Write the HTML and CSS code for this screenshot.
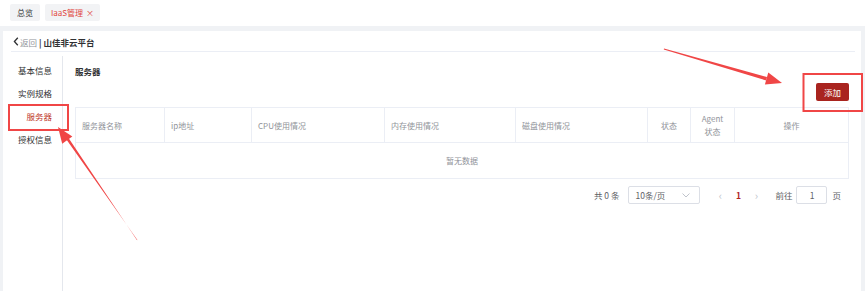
FILE: index.html
```html
<!DOCTYPE html>
<html lang="zh-CN">
<head>
    <meta charset="UTF-8">
    <meta name="viewport" content="width=device-width, initial-scale=1.0">
    <title>IaaS管理 - 山佳非云平台</title>
    <link rel="stylesheet" href="styles.css">
</head>
<body>
    <!-- Tags bar -->
    <div class="tags-bar">
        <span class="tag">总览</span>
        <span class="tag active">IaaS管理 <i class="close">×</i></span>
    </div>

    <div class="main">
        <div class="panel">
            <div class="panel-header">
                <span class="back"><svg width="6" height="9" viewBox="0 0 6 9"><path d="M4.8 0.8 L1.4 4.5 L4.8 8.2" fill="none" stroke="#303133" stroke-width="1.3"/></svg>返回</span>
                <span class="sep">|</span>
                <span class="platform">山佳非云平台</span>
            </div>

            <div class="panel-body">
                <ul class="side">
                    <li>基本信息</li>
                    <li>实例规格</li>
                    <li class="current">服务器</li>
                    <li>授权信息</li>
                </ul>

                <div class="content">
                    <div class="title">服务器</div>
                    <div class="toolbar">
                        <button class="btn-add">添加</button>
                    </div>

                    <table class="grid">
                        <colgroup>
                            <col style="width: 89px">
                            <col style="width: 87px">
                            <col style="width: 133px">
                            <col style="width: 131px">
                            <col style="width: 132px">
                            <col style="width: 43px">
                            <col style="width: 44px">
                            <col style="width: 114px">
                        </colgroup>
                        <thead>
                            <tr>
                                <th>服务器名称</th>
                                <th>ip地址</th>
                                <th>CPU使用情况</th>
                                <th>内存使用情况</th>
                                <th>磁盘使用情况</th>
                                <th class="center">状态</th>
                                <th class="center">Agent<br>状态</th>
                                <th class="center">操作</th>
                            </tr>
                        </thead>
                        <tbody>
                            <tr>
                                <td colspan="8" class="empty">暂无数据</td>
                            </tr>
                        </tbody>
                    </table>

                    <div class="pager">
                        <span class="total">共 0 条</span>
                        <span class="size-select">10条/页<svg width="8" height="5" viewBox="0 0 8 5"><path d="M0.5 0.5 L4 4 L7.5 0.5" fill="none" stroke="#c0c4cc" stroke-width="1"/></svg></span>
                        <span class="nav prev">&lsaquo;</span>
                        <span class="page-num">1</span>
                        <span class="nav">&rsaquo;</span>
                        <span class="jump">前往</span>
                        <span class="jump-input">1</span>
                        <span class="unit">页</span>
                    </div>
                </div>
            </div>
        </div>
    </div>

    <!-- screenshot annotations -->
    <svg class="marks" width="865" height="291" viewBox="0 0 865 291">
        <rect x="9" y="105" width="59" height="25" fill="none" stroke="#f04646" stroke-width="2"/>
        <rect x="803.5" y="74" width="58.5" height="37" fill="none" stroke="#f04646" stroke-width="2"/>
        <polygon points="664,48.6 767,77.1 766.2,80.4 663.8,49.4" fill="#f04646"/>
        <polygon points="782,83 768.3,72.6 764.9,84.6" fill="#f04646"/>
        <polygon points="137.4,240 64.3,136.4 69.2,139 137,240.3" fill="#f04646"/>
        <polygon points="58,127 72.3,136.6 62.2,143.7" fill="#f04646"/>
    </svg>
</body>
</html>
```

FILE: styles.css
```css
body {
    margin: 0;
    width: 865px;
    height: 291px;
    overflow: hidden;
    background: #f0f2f5;
    font-family: 'Noto Sans CJK SC', 'Noto Sans', sans-serif;
    font-size: 8.5px;
    color: #606266;
    position: relative;
}
.tags-bar {
    height: 26px;
    background: #fff;
    box-sizing: border-box;
    padding: 4px 10px 0;
    display: flex;
    gap: 5px;
    align-items: flex-start;
}
.tag {
    height: 17px;
    line-height: 17px;
    padding: 0 7px;
    background: #f2f3f5;
    color: #303133;
    border-radius: 2px;
    font-size: 8px;
}
.tag.active {
    color: #e0463c;
    padding: 0 6px;
}
.close {
    font-style: normal;
    margin-left: 1px;
}
.main {
    padding: 5px 4px 0 3px;
    height: 265px;
    box-sizing: border-box;
}
.panel {
    background: #fff;
    height: 100%;
    display: flex;
    flex-direction: column;
}
.panel-header {
    height: 21px;
    flex: none;
    margin: 0 6px 0 8px;
    border-bottom: 1px solid #ebeef5;
    display: flex;
    align-items: center;
    padding: 1px 0 0 2px;
    box-sizing: border-box;
    color: #303133;
}
.back {
    display: flex;
    align-items: center;
    gap: 1px;
    color: #909399;
}
.sep {
    margin: 0 2px;
    font-weight: bold;
}
.platform {
    font-weight: bold;
}
.panel-body {
    display: flex;
    flex: 1;
}
.side {
    list-style: none;
    margin: 4px 0 0;
    padding: 3px 10px 0 0;
    width: 60px;
    box-sizing: border-box;
    border-right: 1px solid #e4e7ed;
    text-align: right;
}
.side li {
    height: 23px;
    line-height: 23px;
    color: #303133;
}
.side li.current {
    color: #c0392b;
}
.content {
    flex: 1;
    padding: 12px 12px 0 12px;
    min-width: 0;
}
.title {
    line-height: 14px;
    font-weight: bold;
    color: #303133;
}
.toolbar {
    display: flex;
    justify-content: flex-end;
    margin-top: 5px;
}
.btn-add {
    width: 33px;
    height: 18px;
    padding: 0;
    border: none;
    border-radius: 2px;
    background: #a9241f;
    color: #fff;
    font-family: inherit;
    font-size: 8.5px;
}
.grid {
    margin-top: 6px;
    width: 773px;
    border-collapse: collapse;
    table-layout: fixed;
    border: 1px solid #ebeef5;
}
.grid th {
    height: 34px;
    padding: 0 6px;
    text-align: left;
    font-weight: normal;
    color: #909399;
    border-right: 1px solid #ebeef5;
    border-bottom: 1px solid #ebeef5;
    font-size: 8px;
    line-height: 13px;
}
.grid th.center {
    text-align: center;
    padding: 0;
}
.grid td.empty {
    height: 33px;
    text-align: center;
    color: #909399;
    font-size: 8px;
}
.pager {
    display: flex;
    justify-content: flex-end;
    align-items: center;
    margin-top: 7px;
    padding-right: 8px;
    color: #606266;
    font-size: 8.5px;
}
.total {
    margin-right: 9px;
}
.size-select {
    width: 72px;
    height: 18px;
    border: 1px solid #dcdfe6;
    border-radius: 2px;
    box-sizing: border-box;
    display: flex;
    align-items: center;
    justify-content: space-between;
    padding: 0 9px 0 6px;
}
.nav {
    color: #c0c4cc;
    font-size: 11px;
    width: 18px;
    text-align: center;
}
.nav.prev {
    margin-left: 11px;
}
.page-num {
    color: #b0261f;
    font-weight: bold;
    width: 18px;
    text-align: center;
}
.jump {
    margin: 0 4px 0 10px;
}
.jump-input {
    width: 31px;
    height: 18px;
    border: 1px solid #dcdfe6;
    border-radius: 2px;
    box-sizing: border-box;
    line-height: 16px;
    text-align: center;
}
.unit {
    margin-left: 5px;
}
.marks {
    position: absolute;
    top: 0;
    left: 0;
    pointer-events: none;
}
```
